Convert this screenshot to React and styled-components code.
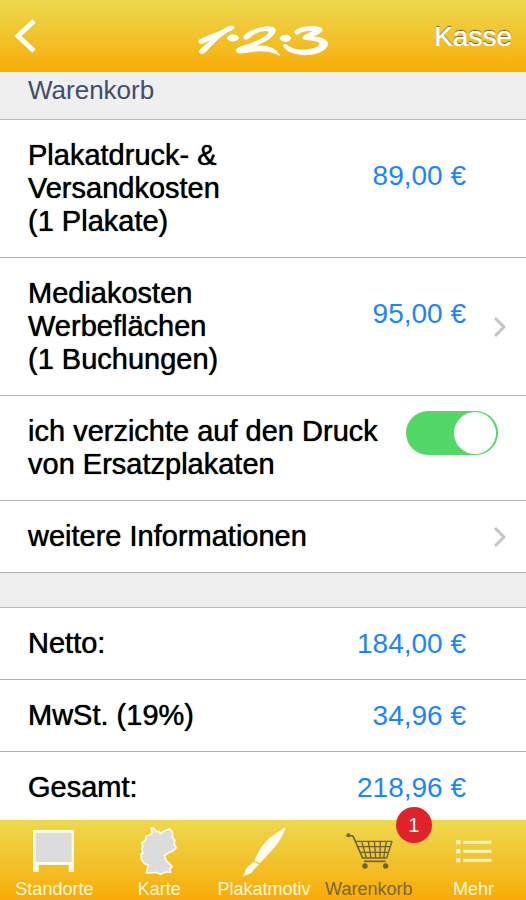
import React, { useState } from "react";
import styled, { createGlobalStyle, css } from "styled-components";

const GlobalStyle = createGlobalStyle`
  *, *::before, *::after { box-sizing: border-box; }
  body {
    margin: 0;
    background: #efefef;
    color: #000;
    font-family: "Liberation Sans", Arial, Helvetica, sans-serif;
  }
  a { color: inherit; text-decoration: none; }
`;

const Screen = styled.div`
  display: flex;
  flex-direction: column;
  height: 100vh;
`;

const barGradient = css`
  background: linear-gradient(#edd84e, #f2c12a 55%, #f9ab06);
`;

const TopBar = styled.header`
  ${barGradient}
  display: grid;
  grid-template-columns: 1fr auto 1fr;
  align-items: center;
  flex: none;
  height: 72px;
  padding: 2px 14px 0;
`;

const BarButton = styled.button`
  display: flex;
  justify-self: ${(p) => (p.$end ? "end" : "start")};
  padding: 0;
  border: 0;
  background: none;
  color: #fff;
  font: inherit;
  font-size: 28px;
  line-height: 32px;
  text-shadow: 0 0 1px #fff, 0 -1px 1px #5e5020;
  cursor: pointer;
`;

const Content = styled.main`
  flex: 1;
  min-height: 0;
  overflow-y: auto;
  scrollbar-width: none;
`;

const SectionTitle = styled.h1`
  margin: 0;
  padding: 2px 28px 14px;
  border-top: 1px solid #faf0d8;
  border-bottom: 1px solid #b9b9b9;
  color: #414d6b;
  font-size: 26px;
  font-weight: 400;
  line-height: 30px;
`;

const Group = styled.ul`
  margin: 0 0 34px;
  padding: 0;
  border-top: ${(p) => (p.$ruled ? "1px solid #b9b9b9" : "0")};
  background: #fff;
  list-style: none;
`;

const Item = styled.li`
  border-bottom: 1px solid #b0b0b0;
`;

const Row = styled.div`
  display: grid;
  grid-template-columns: 1fr auto 40px;
  align-items: center;
  padding: 19px 20px 19px 28px;
`;

const ToggleRow = styled.label`
  display: flex;
  align-items: flex-start;
  justify-content: space-between;
  padding: 19px 28px;
  cursor: pointer;
`;

const Label = styled.span`
  font-size: 29px;
  line-height: 33px;
  text-shadow: 0 0 1px #000;
  white-space: pre-line;
`;

const Price = styled.span`
  align-self: ${(p) => (p.$raised ? "start" : "center")};
  padding-top: ${(p) => (p.$raised ? "20px" : "0")};
  color: #1b86fb;
  font-size: 28px;
  line-height: 33px;
`;

const ChevronSlot = styled.span`
  display: flex;
  grid-column: 3;
  justify-content: flex-end;
`;

const Switch = styled.input`
  appearance: none;
  display: flex;
  flex: none;
  justify-content: ${(p) => (p.checked ? "flex-end" : "flex-start")};
  width: 92px;
  height: 44px;
  margin: -4px 0 0;
  padding: 1px 2px;
  border-radius: 22px;
  background: ${(p) => (p.checked ? "#53d769" : "#ccc")};
  cursor: pointer;

  &::before {
    content: "";
    width: 42px;
    height: 42px;
    border-radius: 50%;
    background: #fff;
  }
`;

const TabBar = styled.nav`
  ${barGradient}
  display: grid;
  grid-template-columns: repeat(5, 1fr);
  flex: none;
  height: 80px;
  padding: 5px 0 0 2px;
`;

const Tab = styled.a`
  position: relative;
  display: flex;
  flex-direction: column;
  align-items: center;
  color: ${(p) => (p.$active ? "#7a673a" : "#fff7de")};
  font-size: 18px;
  line-height: 24px;
`;

const Badge = styled.span`
  position: absolute;
  top: -18px;
  left: calc(50% + 27px);
  width: 36px;
  height: 36px;
  border-radius: 50%;
  background: #e0222b;
  color: #fff;
  font-size: 20px;
  line-height: 36px;
  text-align: center;
`;

const BackIcon = () => (
  <svg width="24" height="40" viewBox="0 0 24 40" fill="none" stroke="#fff" strokeWidth="5" aria-hidden="true">
    <path d="M20 4 4 19 20 34" />
  </svg>
);

const Chevron = () => (
  <svg width="14" height="22" viewBox="0 0 14 22" fill="none" stroke="#c4c4c4" strokeWidth="3" aria-hidden="true">
    <path d="M3 2 12 11 3 20" />
  </svg>
);

const BrushLogo = () => (
  <svg
    width="160"
    height="50"
    viewBox="9 -6 480 150"
    fill="#fff"
    stroke="#fff"
    strokeWidth="3"
    strokeLinejoin="round"
    role="img"
    aria-label="1-2-3"
  >
    <path d="M57 79C80 66 107 58 122 51C135 44 145 36 158 36Q166 39 160 45C142 52 126 64 112 77C98 90 86 103 76 114Q66 122 59 116Q57 110 64 104L96 75C86 79 77 84 64 89Q54 88 57 79Z" />
    <ellipse cx="159" cy="72" rx="16" ry="9" />
    <path d="M193 75C187 68 195 60 210 53C231 43 262 34 280 41C294 48 280 65 263 77C247 87 231 93 218 98C252 92 286 99 299 124C274 109 241 109 213 113C195 116 179 119 171 115C165 108 172 101 188 97C218 88 248 76 263 61C272 52 264 48 250 50C233 52 219 61 210 70Q201 78 193 75Z" />
    <ellipse cx="316" cy="73" rx="16" ry="9" />
    <path d="M345 57C341 47 364 40 388 38C409 37 427 40 426 48C424 59 405 63 393 68C417 69 442 75 443 89C442 109 407 123 373 122C338 120 311 108 311 93Q314 88 321 94C335 106 360 111 384 107C408 104 424 95 419 87C411 78 388 78 374 76C362 73 370 66 382 60L402 51C385 46 363 52 353 60Q348 62 345 57Z" />
  </svg>
);

const TabIcon = ({ origin, children }) => (
  <svg width="60" height="52" viewBox={`${origin} 180 156`} fill="none" aria-hidden="true">
    {children}
  </svg>
);

const BillboardIcon = () => (
  <TabIcon origin="71 75">
    <path d="M98 90H221V216H205V195H115V216H98Z" fill="#fffbe6" />
    <path d="M106 98H214V186H106Z" fill="#dcdcdc" />
  </TabIcon>
);

const GermanyIcon = () => (
  <TabIcon origin="56 30">
    <path
      d="M122 39 131 40 137 50 147 49 150 57 163 47 178 42 186 51 187 68 193 76 192 88 198 98 189 107 175 113 162 123 168 137 186 155 178 162 181 172 166 171 151 178 136 172 122 174 108 174 114 151 101 145 94 134 92 119 98 112 94 101 98 94 94 84 106 75 107 63 119 60 126 52Z"
      fill="#dcdcdc"
      stroke="#fffbe6"
      strokeWidth="5"
      strokeLinejoin="round"
    />
  </TabIcon>
);

const PaintBrushIcon = () => (
  <TabIcon origin="102 75">
    <path d="M257 81C250 106 236 131 211 156L180 190 164 183C172 155 190 127 218 107Z" fill="#fffdf2" />
    <path d="M159 185 177 193C168 203 162 207 159 213C152 223 141 225 127 228C137 219 135 207 143 200C149 196 155 193 159 185Z" fill="#fffdf2" />
  </TabIcon>
);

const CartIcon = () => (
  <TabIcon origin="57 75">
    <g stroke="#6f6038" strokeWidth="4" strokeLinejoin="round">
      <path d="M84 106 99 108 128 174H200" strokeWidth="5" />
      <path d="M106 124H216L200 174M112 140H211M119 157H206" />
      <path d="M125 124 139 174M145 124 153 174M163 124 167 174M181 124 180 174M199 124 191 174" />
      <path d="M132 184H197" strokeWidth="5" />
    </g>
    <circle cx="85" cy="106" r="6" fill="#6f6038" />
    <circle cx="135" cy="198" r="8" fill="#6f6038" />
    <circle cx="197" cy="198" r="8" fill="#6f6038" />
  </TabIcon>
);

const ListIcon = () => (
  <TabIcon origin="371 75">
    <path d="M429 127H513M429 154H513M429 181H513" stroke="#fff3c4" strokeWidth="9" />
    <path d="M408 127H420M408 154H420M408 181H420" stroke="#fffbe6" strokeWidth="12" />
  </TabIcon>
);

const totals = [
  { label: "Netto:", price: "184,00 €" },
  { label: "MwSt. (19%)", price: "34,96 €" },
  { label: "Gesamt:", price: "218,96 €" },
];

const tabs = [
  { label: "Standorte", href: "#standorte", Icon: BillboardIcon },
  { label: "Karte", href: "#karte", Icon: GermanyIcon },
  { label: "Plakatmotiv", href: "#plakatmotiv", Icon: PaintBrushIcon },
  { label: "Warenkorb", href: "#warenkorb", Icon: CartIcon, badge: 1, active: true },
  { label: "Mehr", href: "#mehr", Icon: ListIcon },
];

export default function App() {
  const [noSpares, setNoSpares] = useState(true);

  return (
    <Screen>
      <GlobalStyle />
      <TopBar>
        <BarButton type="button" aria-label="Zurück">
          <BackIcon />
        </BarButton>
        <BrushLogo />
        <BarButton type="button" $end>
          Kasse
        </BarButton>
      </TopBar>

      <Content>
        <SectionTitle>Warenkorb</SectionTitle>
        <Group>
          <Item>
            <Row>
              <Label>{"Plakatdruck- &\nVersandkosten\n(1 Plakate)"}</Label>
              <Price $raised>89,00 €</Price>
            </Row>
          </Item>
          <Item>
            <Row as="a" href="#mediakosten">
              <Label>{"Mediakosten\nWerbeflächen\n(1 Buchungen)"}</Label>
              <Price $raised>95,00 €</Price>
              <ChevronSlot>
                <Chevron />
              </ChevronSlot>
            </Row>
          </Item>
          <Item>
            <ToggleRow htmlFor="no-spares">
              <Label>{"ich verzichte auf den Druck\nvon Ersatzplakaten"}</Label>
              <Switch
                id="no-spares"
                type="checkbox"
                role="switch"
                checked={noSpares}
                onChange={(e) => setNoSpares(e.target.checked)}
              />
            </ToggleRow>
          </Item>
          <Item>
            <Row as="a" href="#informationen">
              <Label>weitere Informationen</Label>
              <ChevronSlot>
                <Chevron />
              </ChevronSlot>
            </Row>
          </Item>
        </Group>

        <Group $ruled>
          {totals.map(({ label, price }) => (
            <Item key={label}>
              <Row>
                <Label>{label}</Label>
                <Price>{price}</Price>
              </Row>
            </Item>
          ))}
        </Group>
      </Content>

      <TabBar>
        {tabs.map(({ label, href, Icon, badge, active }) => (
          <Tab key={label} href={href} $active={active} aria-current={active ? "page" : undefined}>
            <Icon />
            {label}
            {badge && <Badge>{badge}</Badge>}
          </Tab>
        ))}
      </TabBar>
    </Screen>
  );
}
